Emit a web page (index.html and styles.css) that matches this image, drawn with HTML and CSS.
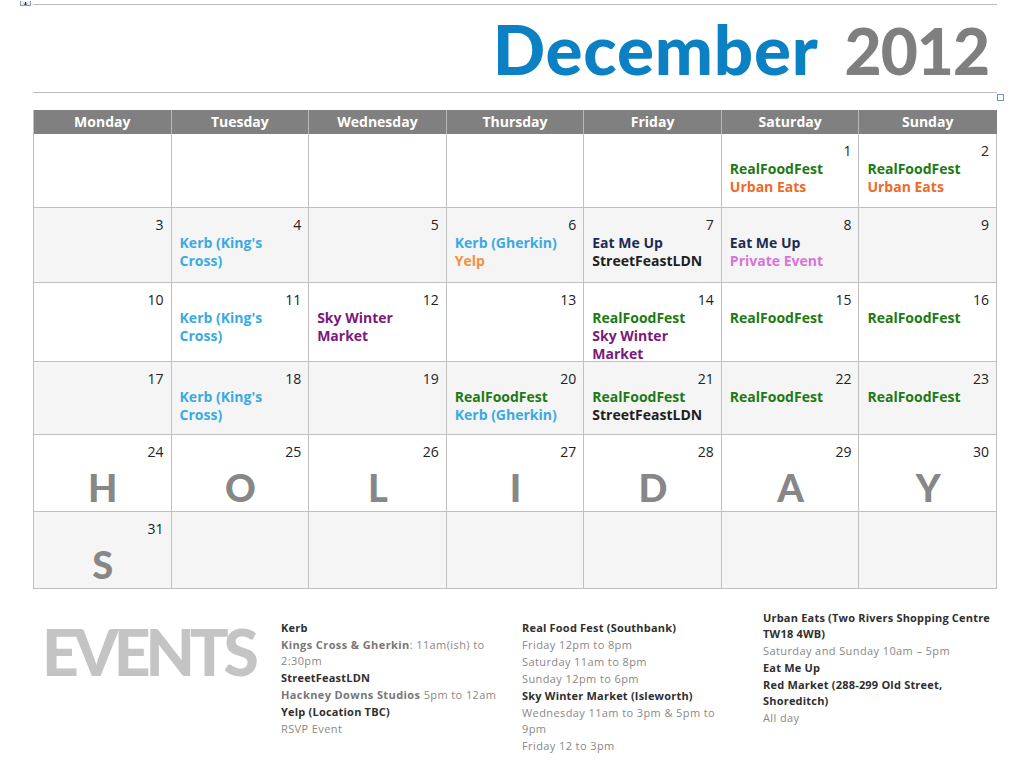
FILE: index.html
```html
<!DOCTYPE html>
<html>
<head>
<meta charset="utf-8">
<link rel="stylesheet" href="styles.css">
</head>
<body>
<div class="page">
  <div class="topline"><span class="handle"><svg width="11" height="5" viewBox="0 0 11 5"><rect x="0.5" y="-1" width="10" height="5.5" fill="#e8eef8" stroke="#8a9ab8"/><path d="M5.5 1v2.5M4 2.5l1.5 1.5 1.5-1.5" stroke="#222" fill="none" stroke-width="1"/></svg></span><span class="rule"></span></div>
  <header class="title">
    <span class="month">December</span>
    <span class="year">2012</span>
  </header>
  <div class="rule2"><span class="sq"></span></div>

  <div class="cal">
    <div class="hd">Monday</div><div class="hd">Tuesday</div><div class="hd">Wednesday</div><div class="hd">Thursday</div><div class="hd">Friday</div><div class="hd">Saturday</div><div class="hd last">Sunday</div>

    <div class="c"></div><div class="c"></div><div class="c"></div><div class="c"></div><div class="c"></div>
    <div class="c"><div class="n">1</div><div class="e green">RealFoodFest</div><div class="e orange">Urban Eats</div></div>
    <div class="c"><div class="n">2</div><div class="e green">RealFoodFest</div><div class="e orange">Urban Eats</div></div>

    <div class="c alt"><div class="n">3</div></div>
    <div class="c alt"><div class="n">4</div><div class="e blue">Kerb (King's Cross)</div></div>
    <div class="c alt"><div class="n">5</div></div>
    <div class="c alt"><div class="n">6</div><div class="e blue">Kerb (Gherkin)</div><div class="e yelp">Yelp</div></div>
    <div class="c alt"><div class="n">7</div><div class="e navy">Eat Me Up</div><div class="e dark">StreetFeastLDN</div></div>
    <div class="c alt"><div class="n">8</div><div class="e navy">Eat Me Up</div><div class="e pink">Private Event</div></div>
    <div class="c alt"><div class="n">9</div></div>

    <div class="c"><div class="n">10</div></div>
    <div class="c"><div class="n">11</div><div class="e blue">Kerb (King's Cross)</div></div>
    <div class="c"><div class="n">12</div><div class="e purple">Sky Winter Market</div></div>
    <div class="c"><div class="n">13</div></div>
    <div class="c"><div class="n">14</div><div class="e green">RealFoodFest</div><div class="e purple">Sky Winter Market</div></div>
    <div class="c"><div class="n">15</div><div class="e green">RealFoodFest</div></div>
    <div class="c"><div class="n">16</div><div class="e green">RealFoodFest</div></div>

    <div class="c alt"><div class="n">17</div></div>
    <div class="c alt"><div class="n">18</div><div class="e blue">Kerb (King's Cross)</div></div>
    <div class="c alt"><div class="n">19</div></div>
    <div class="c alt"><div class="n">20</div><div class="e green">RealFoodFest</div><div class="e blue">Kerb (Gherkin)</div></div>
    <div class="c alt"><div class="n">21</div><div class="e green">RealFoodFest</div><div class="e dark">StreetFeastLDN</div></div>
    <div class="c alt"><div class="n">22</div><div class="e green">RealFoodFest</div></div>
    <div class="c alt"><div class="n">23</div><div class="e green">RealFoodFest</div></div>

    <div class="c"><div class="n">24</div><div class="big">H</div></div>
    <div class="c"><div class="n">25</div><div class="big">O</div></div>
    <div class="c"><div class="n">26</div><div class="big">L</div></div>
    <div class="c"><div class="n">27</div><div class="big">I</div></div>
    <div class="c"><div class="n">28</div><div class="big">D</div></div>
    <div class="c"><div class="n">29</div><div class="big">A</div></div>
    <div class="c"><div class="n">30</div><div class="big">Y</div></div>

    <div class="c alt"><div class="n">31</div><div class="big">S</div></div>
    <div class="c alt"></div><div class="c alt"></div><div class="c alt"></div><div class="c alt"></div><div class="c alt"></div><div class="c alt"></div>
  </div>

  <section class="events">
    <div class="ev-title">EVENTS</div>
    <div class="col col1">
      <p class="h">Kerb</p>
      <p><b>Kings Cross &amp; Gherkin</b><span>: 11am(ish) to</span> <span>2:30pm</span></p>
      <p class="h">StreetFeastLDN</p>
      <p><b>Hackney Downs Studios</b> <span>5pm to 12am</span></p>
      <p class="h">Yelp (Location TBC)</p>
      <p>RSVP Event</p>
    </div>
    <div class="col col2">
      <p class="h">Real Food Fest (Southbank)</p>
      <p>Friday 12pm to 8pm</p>
      <p>Saturday 11am to 8pm</p>
      <p>Sunday 12pm to 6pm</p>
      <p class="h">Sky Winter Market (Isleworth)</p>
      <p>Wednesday 11am to 3pm &amp; 5pm to 9pm</p>
      <p>Friday 12 to 3pm</p>
    </div>
    <div class="col col3">
      <p class="h">Urban Eats (Two Rivers Shopping Centre TW18 4WB)</p>
      <p>Saturday and Sunday 10am – 5pm</p>
      <p class="h">Eat Me Up</p>
      <p class="h">Red Market (288-299 Old Street, Shoreditch)</p>
      <p>All day</p>
    </div>
  </section>
</div>
</body>
</html>
```

FILE: styles.css
```css
* { box-sizing: border-box; }
html, body { margin: 0; padding: 0; background: #fff; }
body { font-family: "Open Sans", "Liberation Sans", sans-serif; color: #333; }
.page { width: 1028px; height: 769px; overflow: hidden; }

.topline { display: flex; align-items: flex-start; height: 5px; padding-left: 20px; }
.handle { display: block; width: 12px; height: 5px; line-height: 0; margin-right: 1px; }
.rule { display: block; flex: 0 0 964px; height: 5px; border-bottom: 1px solid #bdbdbd; }

.title { display: flex; justify-content: flex-end; align-items: baseline; gap: 26px; height: 87px; padding-right: 39px; font-family: "Lato", sans-serif; }
.month { font-size: 69px; font-weight: 900; color: #0b81c3; line-height: 87px; letter-spacing: 0.8px; }
.year { font-size: 64px; font-weight: 900; color: #7f7f7f; line-height: 87px; letter-spacing: -1px; }

.rule2 { position: relative; margin-left: 33px; width: 964px; border-top: 1px solid #bdbdbd; height: 18px; }
.sq { position: absolute; right: -7px; top: 1px; width: 7px; height: 7px; border: 1px solid #6f8fc8; background: #fff; }

.cal { margin-left: 33px; width: 964px; display: grid; grid-template-columns: repeat(7, 1fr);
  grid-template-rows: 24px 74px 75px 79px 73px 77px 77px; border-left: 1px solid #c0c0c0; }
.hd { background: #808080; color: #fff; font-weight: 700; font-size: 14px; text-align: center; line-height: 24px; border-right: 1px solid #b8b8b8; }
.hd.last { border-right: 1px solid #808080; }
.c { border-right: 1px solid #c0c0c0; border-bottom: 1px solid #c0c0c0; background: #fff; padding: 8px 7px 0 8px; }
.c.alt { background: #f5f5f5; }
.n { text-align: right; font-size: 14px; line-height: 18px; color: #222; }
.e { font-size: 14px; font-weight: 700; line-height: 18px; }
.green { color: #1d7a12; }
.orange { color: #ef6a25; }
.blue { color: #3aaae3; }
.yelp { color: #f3923b; }
.navy { color: #1c2a55; }
.dark { color: #1e1e1e; }
.pink { color: #d874d8; }
.purple { color: #7b1a7b; }
.big { text-align: center; font-family: "Lato", sans-serif; font-size: 38px; font-weight: 900; color: #878787; line-height: 40px; margin-top: 6px; }

.events { display: flex; align-items: flex-start; padding: 21px 0 0 42px; }
.ev-title { width: 239px; font-family: "Lato", sans-serif; font-size: 64px; font-weight: 900; color: #c4c4c4; letter-spacing: -5px; line-height: 80px; margin-top: 2px; }
.col { font-size: 11px; line-height: 16px; color: #888; letter-spacing: 0.4px; }
.col p { margin: 0 0 1px; }
.col b { color: #777; font-weight: 700; }
.col .h { color: #2f2f2f; font-weight: 700; letter-spacing: 0.2px; }
.col1 { width: 220px; margin-right: 21px; padding-top: 10px; }
.col2 { width: 220px; margin-right: 21px; padding-top: 10px; }
.col3 { width: 232px; padding-top: 0; }
```
